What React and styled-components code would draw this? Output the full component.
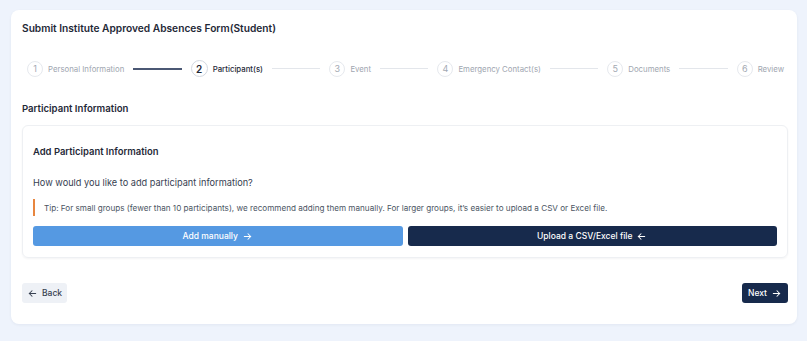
import React from 'react'
import styled, { createGlobalStyle } from 'styled-components'

const steps = [
  { n: 1, label: 'Personal Information' },
  { n: 2, label: 'Participant(s)', active: true },
  { n: 3, label: 'Event' },
  { n: 4, label: 'Emergency Contact(s)' },
  { n: 5, label: 'Documents' },
  { n: 6, label: 'Review' },
]

function ArrowRight() {
  return (
    <svg width="11" height="11" viewBox="0 0 24 24" fill="none" stroke="currentColor" strokeWidth="2.2" strokeLinecap="round" strokeLinejoin="round">
      <path d="M5 12h14" />
      <path d="M13 6l6 6-6 6" />
    </svg>
  )
}

function ArrowLeft() {
  return (
    <svg width="11" height="11" viewBox="0 0 24 24" fill="none" stroke="currentColor" strokeWidth="2.2" strokeLinecap="round" strokeLinejoin="round">
      <path d="M19 12H5" />
      <path d="M11 6l-6 6 6 6" />
    </svg>
  )
}

export default function App() {
  return (
    <>
      <GlobalStyle />
      <Page>
        <Card>
          <Title>Submit Institute Approved Absences Form(Student)</Title>

          <Stepper>
            {steps.map((s, i) => (
              <React.Fragment key={s.n}>
                {i > 0 && <Line done={i === 1} />}
                <Step>
                  <Circle active={s.active}>{s.n}</Circle>
                  <StepLabel active={s.active}>{s.label}</StepLabel>
                </Step>
              </React.Fragment>
            ))}
          </Stepper>

          <SectionTitle>Participant Information</SectionTitle>

          <Inner>
            <InnerTitle>Add Participant Information</InnerTitle>
            <Question>How would you like to add participant information?</Question>
            <Tip>
              Tip: For small groups (fewer than 10 participants), we recommend adding them manually. For larger groups, it’s easier to upload a CSV or Excel file.
            </Tip>
            <Choices>
              <ChoiceButton variant="light">
                Add manually <ArrowRight />
              </ChoiceButton>
              <ChoiceButton variant="dark">
                Upload a CSV/Excel file <ArrowLeft />
              </ChoiceButton>
            </Choices>
          </Inner>

          <Footer>
            <NavButton>
              <ArrowLeft /> Back
            </NavButton>
            <NavButton primary>
              Next <ArrowRight />
            </NavButton>
          </Footer>
        </Card>
      </Page>
    </>
  )
}

const GlobalStyle = createGlobalStyle`
  * { box-sizing: border-box; }
  body {
    margin: 0;
    background: #eef3fc;
    font-family: Inter, "Liberation Sans", sans-serif;
  }
`

const Page = styled.div`
  width: 807px;
  height: 341px;
  padding: 10px 10px 17px 11px;
  background: #eef3fc;
`

const Card = styled.div`
  width: 786px;
  height: 314px;
  background: #ffffff;
  border-radius: 8px;
  box-shadow: 0 1px 3px rgba(30, 50, 90, 0.06);
  padding: 10px 9px 0 11px;
`

const Title = styled.h1`
  margin: 0;
  font-size: 10.2px;
  font-weight: 600;
  color: #1f2937;
  line-height: 16px;
`

const Stepper = styled.div`
  display: flex;
  align-items: center;
  margin: 24px 4px 0 5px;
  height: 17px;
`

const Step = styled.div`
  display: flex;
  align-items: center;
  gap: 5px;
`

const Circle = styled.div`
  width: ${p => (p.active ? 17 : 16)}px;
  height: ${p => (p.active ? 17 : 16)}px;
  border-radius: 50%;
  border: 1px solid ${p => (p.active ? '#d3d8e0' : '#e6e9ee')};
  display: flex;
  align-items: center;
  justify-content: center;
  font-size: ${p => (p.active ? 10 : 9)}px;
  font-weight: ${p => (p.active ? 600 : 400)};
  color: ${p => (p.active ? '#1f2937' : '#a3a9b3')};
  background: #fff;
`

const StepLabel = styled.span`
  font-size: 7.8px;
  font-weight: ${p => (p.active ? 500 : 400)};
  color: ${p => (p.active ? '#1f2937' : '#a0a6b0')};
  white-space: nowrap;
`

const Line = styled.div`
  flex: 1;
  height: ${p => (p.done ? 2 : 1)}px;
  margin: 0 9px;
  background: ${p => (p.done ? '#4b5874' : '#e3e6eb')};
`

const SectionTitle = styled.h2`
  margin: 25px 0 0;
  font-size: 9.6px;
  font-weight: 600;
  color: #1f2937;
  line-height: 14px;
`

const Inner = styled.div`
  margin-top: 9px;
  width: 766px;
  border: 1px solid #eef0f3;
  border-radius: 6px;
  box-shadow: 0 1px 2px rgba(30, 40, 60, 0.05);
  padding: 19px 10px 11px 10px;
`

const InnerTitle = styled.h3`
  margin: 0;
  font-size: 9.45px;
  font-weight: 600;
  color: #1f2937;
  line-height: 14px;
`

const Question = styled.p`
  margin: 17px 0 0;
  font-size: 9.2px;
  color: #374151;
  line-height: 13px;
`

const Tip = styled.div`
  margin-top: 10px;
  border-left: 2px solid #e8863f;
  padding-left: 9px;
  height: 17px;
  display: flex;
  align-items: center;
  font-size: 8.15px;
  color: #4b5563;
`

const Choices = styled.div`
  display: grid;
  grid-template-columns: 1fr 1fr;
  gap: 5px;
  margin-top: 10px;
`

const ChoiceButton = styled.button`
  height: 20px;
  border: none;
  border-radius: 3px;
  display: flex;
  align-items: center;
  justify-content: center;
  gap: 4px;
  font-family: inherit;
  font-size: 8.5px;
  font-weight: 500;
  color: #ffffff;
  background: ${p => (p.variant === 'dark' ? '#172a4c' : '#5599e2')};
`

const Footer = styled.div`
  display: flex;
  justify-content: space-between;
  align-items: center;
  margin-top: 25px;
  width: 766px;
`

const NavButton = styled.button`
  height: 20px;
  padding: 0 ${p => (p.primary ? 6 : 5)}px;
  border: none;
  border-radius: 3px;
  display: flex;
  align-items: center;
  gap: 4px;
  font-family: inherit;
  font-size: 8.5px;
  font-weight: 500;
  color: ${p => (p.primary ? '#ffffff' : '#374151')};
  background: ${p => (p.primary ? '#172a4c' : '#eef1f6')};
`
